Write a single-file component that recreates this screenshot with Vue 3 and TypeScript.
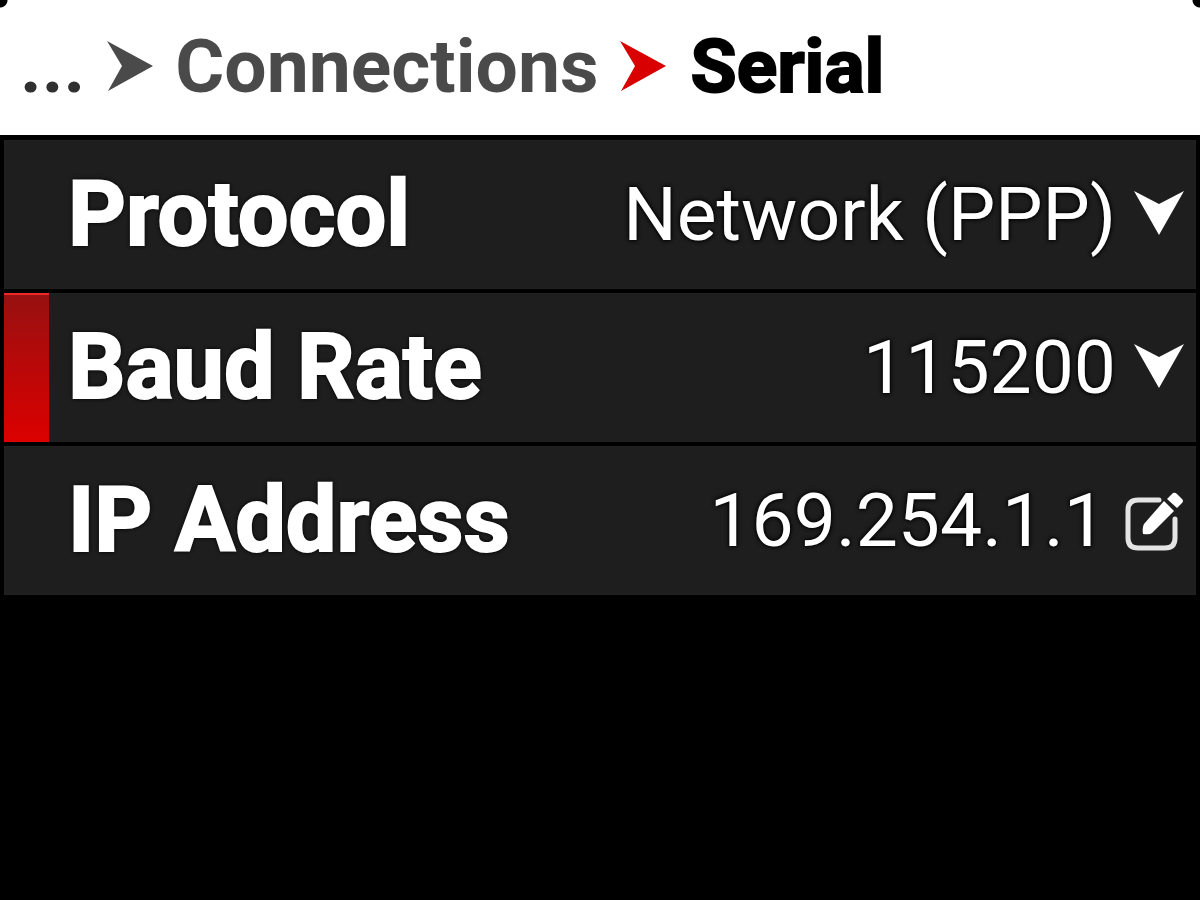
<script setup lang="ts">
import { ref } from 'vue'

interface Field {
  id: string
  label: string
  kind: 'select' | 'text'
  value: string
  options: string[]
}

const fields = ref<Field[]>([
  { id: 'protocol', label: 'Protocol', kind: 'select', value: 'Network (PPP)', options: ['Network (PPP)'] },
  { id: 'baud', label: 'Baud Rate', kind: 'select', value: '115200', options: ['9600', '19200', '38400', '57600', '115200'] },
  { id: 'ip', label: 'IP Address', kind: 'text', value: '169.254.1.1', options: [] },
])

const active = ref('baud')

function edit(id: string) {
  active.value = id
  document.getElementById(id)?.focus()
}
</script>

<template>
  <div class="screen">
    <header class="header">
      <nav class="crumbs" aria-label="Breadcrumb">
        <a class="crumb more" href="#">...</a>
        <svg class="sep" viewBox="0 0 46 50" aria-hidden="true">
          <path d="M0 0 L46 25 L1 50 L15 25 Z" />
        </svg>
        <a class="crumb parent" href="#">Connections</a>
        <svg class="sep current-sep" viewBox="0 0 46 50" aria-hidden="true">
          <path d="M0 0 L46 25 L1 50 L15 25 Z" />
        </svg>
        <span class="crumb current" aria-current="page">Serial</span>
      </nav>
    </header>

    <main class="rows">
      <div v-for="f in fields" :key="f.id" class="row" :class="{ active: f.id === active }">
        <span class="marker"></span>
        <label class="name" :for="f.id">{{ f.label }}</label>
        <template v-if="f.kind === 'select'">
          <select :id="f.id" v-model="f.value" class="value" @focus="active = f.id">
            <option v-for="o in f.options" :key="o">{{ o }}</option>
          </select>
          <svg class="arrow" viewBox="0 0 50 44" aria-hidden="true">
            <path d="M0 0 L25 13 L50 0 L25 44 Z" />
          </svg>
        </template>
        <template v-else>
          <input :id="f.id" v-model="f.value" class="value" type="text" @focus="active = f.id" />
          <button class="edit" type="button" :aria-label="'Edit ' + f.label" @click="edit(f.id)">
            <svg viewBox="0 0 60 60" aria-hidden="true">
              <path class="box" d="M35 9 H14 Q4 9 4 19 V47 Q4 57 14 57 H41 Q51 57 51 47 V28" />
              <path class="pencil" d="M40 10 L50 20 L28 42 Q26 44 19 43 Q18 36 20 33 Z" />
              <path class="pencil" d="M43 8 L49 2 Q51 1 53 3 L58 8 Q60 10 58 12 L53 17 Z" />
            </svg>
          </button>
        </template>
      </div>
    </main>
  </div>
</template>

<style>
html,
body {
  background: #000;
}
</style>

<style scoped>
.screen {
  min-height: 100vh;
  background: #000;
  font-family: Roboto, "Liberation Sans", sans-serif;
}

.header {
  display: flex;
  align-items: center;
  height: 135px;
  padding: 0 20px 4px;
  box-sizing: border-box;
  background:
    radial-gradient(circle at 0 0, #000 7px, transparent 8px),
    radial-gradient(circle at 100% 0, #000 7px, transparent 8px),
    #fff;
}

.crumbs {
  display: flex;
  align-items: center;
  gap: 22px;
}

.crumb {
  font-size: 75px;
  line-height: 88px;
  font-weight: 700;
  text-decoration: none;
  white-space: nowrap;
}

.more {
  color: #303030;
}

.parent {
  color: #4a4a4a;
}

.current {
  margin-left: 2px;
  color: #000;
  -webkit-text-stroke: 2px #000;
}

.sep {
  width: 46px;
  height: 50px;
  fill: #4a4a4a;
}

.current-sep {
  fill: #d80000;
}

.rows {
  display: flex;
  flex-direction: column;
  gap: 4px;
  padding: 5px 4px;
}

.row {
  display: flex;
  align-items: center;
  min-height: 149px;
  padding-right: 12px;
  background: #1e1e1e;
  box-shadow: inset 0 0 2px #2c2c2c;
  color: #fff;
}

.marker {
  align-self: stretch;
  flex: none;
  width: 45px;
}

.active .marker {
  background: linear-gradient(#981010, #dc0000);
  border-top: 2px solid #e82a2a;
  box-sizing: border-box;
}

.name {
  flex: none;
  margin-left: 19px;
  font-size: 90px;
  line-height: 104px;
  font-weight: 700;
  -webkit-text-stroke: 2px #fff;
  text-shadow: 0 0 4px #000, 0 0 4px #000;
}

.value {
  flex: 1;
  min-width: 0;
  height: 104px;
  margin: 0;
  padding: 0 0 2px;
  border: 0;
  outline: 0;
  appearance: none;
  background: transparent;
  color: #fff;
  font-family: inherit;
  font-size: 75px;
  font-weight: 400;
  text-align: right;
  text-align-last: right;
  text-shadow: 0 0 4px #000, 0 0 4px #000;
}

.value option {
  background: #1e1e1e;
}

.arrow {
  flex: none;
  width: 50px;
  height: 44px;
  margin: 0 0 4px 18px;
  fill: #fff;
}

.edit {
  flex: none;
  width: 60px;
  height: 60px;
  margin-left: 18px;
  padding: 0;
  border: 0;
  background: transparent;
  cursor: pointer;
}

.edit svg {
  display: block;
  width: 60px;
  height: 60px;
}

.box {
  fill: none;
  stroke: #e4e4e4;
  stroke-width: 5;
  stroke-linecap: round;
}

.pencil {
  fill: #fff;
}
</style>
